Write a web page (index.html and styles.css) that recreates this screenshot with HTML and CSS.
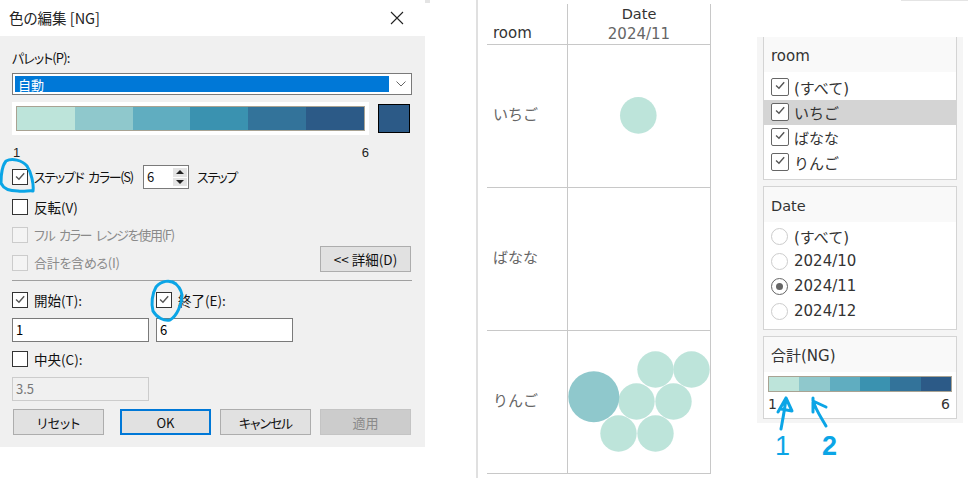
FILE: index.html
```html
<!DOCTYPE html>
<html lang="ja">
<head>
<meta charset="utf-8">
<title>色の編集 [NG]</title>
<link rel="stylesheet" href="styles.css">
</head>
<body>
<svg class="defs" width="0" height="0" aria-hidden="true">
  <symbol id="check" viewBox="0 0 16 16"><path d="M3.500 7.500 6.800 10.500 12.800 3.800" fill="none" stroke="#555" stroke-width="1.600"/></symbol>
</svg>
<div class="page">
  <section class="dialog">
    <header class="titlebar">
      <span class="title">色の編集 [NG]</span>
      <svg class="close" width="14" height="14" viewBox="0 0 14 14"><path d="M1 1 13 13M13 1 1 13" stroke="#222" stroke-width="1.100" fill="none"/></svg>
    </header>
    <div class="dialog-body">
      <div class="row label-row tight">パレット(P):</div>
      <div class="select"><span class="select-value">自動</span><svg class="chev" width="10" height="6" viewBox="0 0 10 6"><path d="M.5.5 5 5 9.500.5" fill="none" stroke="#666"/></svg></div>
      <div class="ramp-row">
        <div class="ramp-box"><div class="ramp"><i class="c1"></i><i class="c2"></i><i class="c3"></i><i class="c4"></i><i class="c5"></i><i class="c6"></i></div></div>
        <div class="swatch"></div>
      </div>
      <div class="scale-row"><span>1</span><span>6</span></div>
      <div class="row step-row">
        <span class="box"><svg><use href="#check"/></svg></span><span class="step-label tight spaced">ステップド カラー(S)</span>
        <div class="spinner"><span>6</span><div class="spin-btns"><b class="up"></b><b class="down"></b></div></div>
        <span class="tighter">ステップ</span>
      </div>
      <div class="row check-row invert"><span class="box"></span><span class="kanji">反転(V)</span></div>
      <div class="row check-row full disabled"><span class="box"></span><span class="tight spaced">フル カラー レンジを使用(F)</span></div>
      <div class="total-row">
        <div class="row check-row disabled"><span class="box"></span><span class="semi">合計を含める(I)</span></div>
        <button class="btn detail" type="button">&lt;&lt; 詳細(D)</button>
      </div>
      <hr class="rule">
      <div class="pair check-pair">
        <div class="row check-row"><span class="box"><svg><use href="#check"/></svg></span><span class="kanji">開始(T):</span></div>
        <div class="row check-row"><span class="box"><svg><use href="#check"/></svg></span><span class="kanji">終了(E):</span></div>
      </div>
      <div class="pair input-pair">
        <div class="input">1</div>
        <div class="input">6</div>
      </div>
      <div class="row check-row center"><span class="box"></span><span class="kanji">中央(C):</span></div>
      <div class="input input-disabled">3.5</div>
      <div class="buttons">
        <button class="btn" type="button">リセット</button>
        <button class="btn primary" type="button">OK</button>
        <button class="btn kana" type="button">キャンセル</button>
        <button class="btn off" type="button">適用</button>
      </div>
    </div>
  </section>

  <section class="viz">
    <div class="table">
      <div class="head-room">room</div>
      <div class="head-date"><span class="date-name">Date</span><span class="date-val">2024/11</span></div>
      <div class="room-cell">いちご</div>
      <div class="plot">
        <svg width="142" height="142" viewBox="0 0 142 142"><circle cx="70.300" cy="70.400" r="18.300" fill="#bde4da"/></svg>
      </div>
      <div class="room-cell">ばなな</div>
      <div class="plot"></div>
      <div class="room-cell">りんご</div>
      <div class="plot">
        <svg width="142" height="142" viewBox="0 0 142 142">
          <g fill="#bde4da">
            <circle cx="87.500" cy="38.500" r="18.200"/><circle cx="123.500" cy="38.500" r="18.200"/>
            <circle cx="68.500" cy="70.500" r="18.200"/><circle cx="105.500" cy="70.500" r="18.200"/>
            <circle cx="50.500" cy="102.500" r="18.200"/><circle cx="87.500" cy="102.500" r="18.200"/>
          </g>
          <circle cx="25.800" cy="65.800" r="25.500" fill="#8fc8cc"/>
        </svg>
      </div>
    </div>
  </section>

  <aside class="side">
    <div class="card room-card">
      <div class="card-head">room</div>
      <div class="opt"><span class="box small"><svg><use href="#check"/></svg></span>(すべて)</div>
      <div class="opt hot"><span class="box small"><svg><use href="#check"/></svg></span>いちご</div>
      <div class="opt"><span class="box small"><svg><use href="#check"/></svg></span>ばなな</div>
      <div class="opt"><span class="box small"><svg><use href="#check"/></svg></span>りんご</div>
    </div>
    <div class="card date-card">
      <div class="card-head">Date</div>
      <div class="opt"><span class="radio"></span>(すべて)</div>
      <div class="opt"><span class="radio"></span>2024/10</div>
      <div class="opt"><span class="radio on"></span>2024/11</div>
      <div class="opt"><span class="radio"></span>2024/12</div>
    </div>
    <div class="card sum-card">
      <div class="card-head">合計(NG)</div>
      <div class="legend"><i class="c1"></i><i class="c2"></i><i class="c3"></i><i class="c4"></i><i class="c5"></i><i class="c6"></i></div>
      <div class="legend-scale"><span>1</span><span>6</span></div>
    </div>
  </aside>
</div>

<div class="edge edge-a"></div>
<div class="edge edge-b"></div>

<svg class="ink" width="968" height="478" viewBox="0 0 968 478" aria-hidden="true">
  <g fill="none" stroke="#0ba5e6" stroke-width="3" stroke-linecap="round" stroke-linejoin="round">
    <path d="M27 166C22 160 12 158 6 161 2 166 1 175 1 183 3 188 9 191 18 191 24 192 30 190 33 191 34 184 31 172 27 166"/>
    <path d="M176 284C170 279 161 281 156 287 152 294 151 304 153 311 157 318 164 321 170 320 177 316 182 304 182 295 181 289 178 285 173 282"/>
    <path d="M781 429C783 418 785 408 786 398M778 412 786 398 792 411 781 409"/>
    <path d="M826 426C821 417 815 409 813 400M813 398 813 412M813 401 826 407"/>
  </g>
</svg>
<span class="ink-num one">1</span>
<span class="ink-num two">2</span>
</body>
</html>
```
FILE: styles.css
```css
* { box-sizing: border-box; }
html, body { margin: 0; padding: 0; }
body {
  position: relative;
  width: 968px;
  height: 478px;
  overflow: hidden;
  background: #fff;
  font-family: "Noto Sans CJK JP", sans-serif;
  font-feature-settings: "palt";
  font-size: 13px;
  color: #111;
}
.defs { position: absolute; }
.page { display: flex; align-items: flex-start; height: 478px; }

/* ramp colours */
.c1 { background: #bde4da; }
.c2 { background: #8fc8cc; }
.c3 { background: #60adc0; }
.c4 { background: #3a92b0; }
.c5 { background: #33739a; }
.c6 { background: #2c5a87; }

/* text tuning in the dialog */
.tight { letter-spacing: -.9px; white-space: nowrap; }
.tighter { letter-spacing: -1.500px; white-space: nowrap; }
.spaced { letter-spacing: -1.300px; word-spacing: 3px; }
.semi { letter-spacing: -.3px; }
.kanji { font-size: 13.500px; white-space: nowrap; }

/* dialog */
.dialog { width: 425px; height: 447px; flex: none; background: #f0f0f0; }
.titlebar { height: 36px; background: #fff; display: flex; align-items: center; justify-content: space-between; padding: 0 21px 0 9px; }
.title { font-size: 14.500px; color: #222; line-height: 36px; }
.close { display: block; }
.dialog-body { display: flex; flex-direction: column; padding: 12px 13px 0 12px; }
.row { display: flex; align-items: center; line-height: 18px; }
.label-row { height: 20px; }
.select { height: 22px; margin-top: 5px; background: #fff; border: 1px solid #7a7a7a; padding: 2px; display: flex; align-items: center; }
.select-value { width: 374px; height: 16px; background: #0078d7; color: #fff; padding-left: 3px; line-height: 17px; font-size: 13px; }
.chev { margin-left: 7px; display: block; }
.ramp-row { display: flex; margin-top: 7px; height: 33px; }
.ramp-box { width: 357px; height: 33px; background: #fff; padding: 4px; }
.ramp { display: flex; height: 25px; border: 1px solid #a9a393; }
.ramp i { flex: 1; }
.swatch { width: 32px; height: 29px; margin: 2px 0 0 9px; background: #2c5a87; border: 1px solid #000; }
.scale-row { display: flex; justify-content: space-between; width: 357px; height: 16px; margin-top: 8px; line-height: 20px; padding-left: 1px; color: #222; font-family: "Liberation Sans", sans-serif; }
.box { width: 16px; height: 16px; flex: none; border: 1px solid #333; background: #fff; display: block; margin-right: 6px; }
.box svg { display: block; width: 14px; height: 14px; }
.step-row { height: 24px; margin-top: 6px; }
.step-label { width: 109px; }
.spinner { width: 46px; height: 24px; border: 1px solid #7a7a7a; background: #fff; display: flex; justify-content: space-between; align-items: center; padding-left: 3px; margin-right: 8px; }
.spin-btns { width: 14px; height: 18px; margin-right: 1px; display: flex; flex-direction: column; gap: 1px; }
.spin-btns b { flex: 1; background: #e4e4e4; display: flex; align-items: center; justify-content: center; }
.up::before, .down::before { content: ""; border-left: 4px solid transparent; border-right: 4px solid transparent; }
.up::before { border-bottom: 4px solid #222; }
.down::before { border-top: 4px solid #222; }
.check-row { height: 18px; }
.invert { margin-top: 9px; }
.full { margin-top: 10px; }
.disabled { color: #8a8a8a; }
.disabled .box { border-color: #ccc; background: #f4f4f4; }
.total-row { display: flex; justify-content: space-between; align-items: flex-end; height: 26px; margin-top: 2px; }
.btn { width: 91px; height: 26px; padding: 0; font: inherit; font-size: 13px; color: #111; background: #e1e1e1; border: 1px solid #adadad; }
.kana { letter-spacing: -1.200px; }
.detail { margin-right: 1px; font-size: 13.500px; }
.rule { width: 100%; height: 1px; margin: 8px 0 0; border: 0; background: #a0a0a0; }
.pair { display: grid; grid-template-columns: 137px 137px; column-gap: 7px; }
.check-pair { margin-top: 10px; }
.input-pair { margin-top: 9px; }
.input { width: 137px; height: 24px; border: 1px solid #7a7a7a; background: #fff; line-height: 22px; padding-left: 3px; color: #000; }
.center { margin-top: 8px; }
.input-disabled { margin-top: 9px; background: #f0f0f0; border-color: #ccc; color: #777; }
.buttons { display: flex; justify-content: space-between; width: 398px; margin: 8px 0 0 1px; }
.buttons .btn:nth-child(2) { margin-left: 7px; }
.primary { border: 2px solid #0078d7; }
.off { background: #cccccc; border-color: #c4c4c4; color: #8a8a8a; }

/* viz */
.viz { width: 235px; height: 478px; margin-left: 51px; flex: none; border-left: 2px solid #e0e0e0; padding: 4px 0 0 9px; }
.table { width: 224px; display: grid; grid-template-columns: 81px 143px; grid-template-rows: 41px 143px 143px 143px; font-family: "DejaVu Sans", "Noto Sans CJK JP", sans-serif; font-feature-settings: normal; }
.head-room, .head-date, .room-cell, .plot { border-bottom: 1px solid #c8c8c8; }
.head-room { border-right: 1px solid #c8c8c8; font-size: 15px; color: #333; padding: 19px 0 0 6px; line-height: 20px; }
.head-date { border-right: 1px solid #c8c8c8; display: flex; flex-direction: column; align-items: center; font-size: 14.500px; line-height: 20px; }
.date-name { color: #333; }
.date-val { color: #666; font-size: 15px; }
.room-cell { border-right: 1px solid #c8c8c8; display: flex; align-items: center; padding: 0 0 5px 6px; color: #666; font-size: 15px; font-family: "Noto Sans CJK JP", sans-serif; }
.plot { border-right: 1px solid #c8c8c8; }
.plot svg { display: block; }

/* side */
.side { width: 206px; height: 386px; margin: 37px 0 0 46px; flex: none; background: #f5f5f5; padding: 0 6px; display: flex; flex-direction: column; gap: 6px; }
.card { width: 194px; background: #fff; border: 1px solid #d4d4d4; font-family: "DejaVu Sans", "Noto Sans CJK JP", sans-serif; font-feature-settings: normal; font-size: 15px; color: #333; }
.room-card { height: 143px; border-top: 0; }
.date-card { height: 144px; }
.sum-card { height: 83px; }
.card-head { height: 35px; background: #f9f9f9; padding-left: 7px; line-height: 39px; font-size: 15px; }
.date-card .card-head { font-size: 14.500px; line-height: 38px; }
.sum-card .card-head { line-height: 39px; }
.opt { height: 25px; display: flex; align-items: center; padding: 0 0 1px 7px; }
.room-card .opt:nth-child(2) { margin-top: 3px; }
.date-card .opt:nth-child(2) { margin-top: 2px; }
.hot { background: #d4d4d4; }
.box.small { width: 18px; height: 18px; margin-right: 5px; border-color: #666; border-radius: 2px; padding: 0 1px; }
.radio { width: 17px; height: 17px; border-radius: 50%; border: 1px solid #ccc; background: #fff; margin-right: 6px; flex: none; display: flex; align-items: center; justify-content: center; }
.radio.on { border-color: #666; }
.radio.on::after { content: ""; width: 7px; height: 7px; border-radius: 50%; background: #666; }
.legend { display: flex; width: 184px; height: 16px; margin: 4px 0 0 4px; border: 1px solid #a9a393; }
.legend i { flex: 1; }
.legend-scale { display: flex; justify-content: space-between; padding: 3px 6px 0 4px; line-height: 18px; font-size: 14px; }

/* screenshot edges and pen marks over the page */
.edge { position: absolute; background: #e4e4e4; }
.edge-a { left: 425px; top: 0; width: 5px; height: 3px; }
.edge-b { left: 901px; top: 0; width: 67px; height: 1px; }
.ink { position: absolute; left: 0; top: 0; pointer-events: none; }
.ink-num { position: absolute; font-family: "Liberation Sans", sans-serif; font-weight: 700; color: #0ba5e6; font-size: 27px; line-height: 26px; }
.one { left: 775px; top: 433px; font-weight: 400; }
.two { left: 822px; top: 433px; }
```
